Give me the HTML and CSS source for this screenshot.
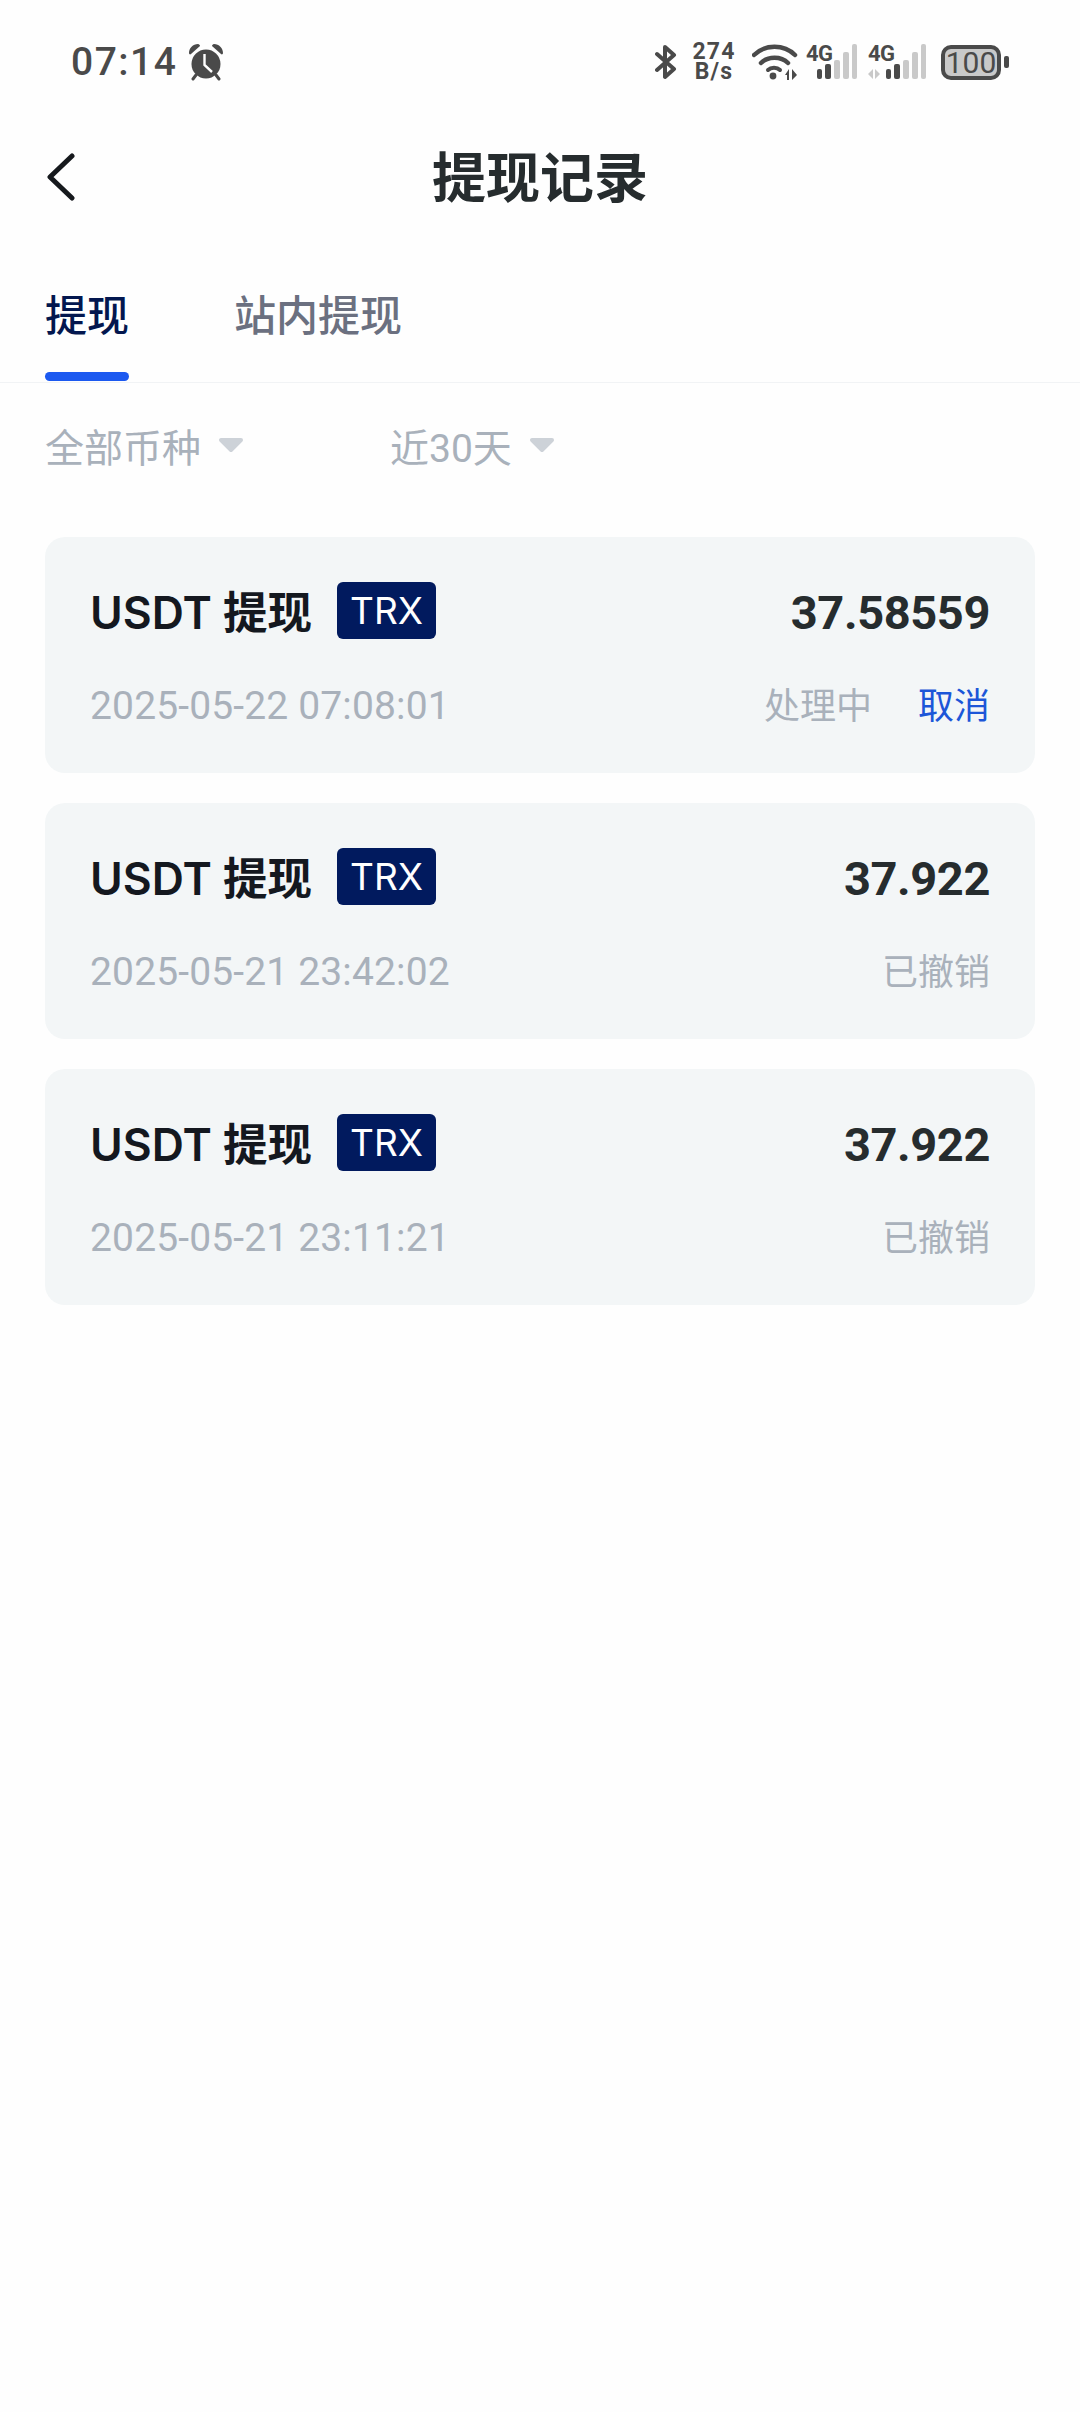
FILE: index.html
```html
<!DOCTYPE html>
<html>
<head>
	<meta charset="UTF-8">
	<title>提现记录</title>
	<link rel="stylesheet" href="styles.css">
</head>
<body>
	<div class="status-bar">
		<div class="status-left">
			<span class="clock">07:14</span>
			<svg class="alarm" width="36" height="38" viewBox="0 0 36 38">
				<circle cx="18" cy="21" r="14.5" fill="#4a4a4a"/>
				<path d="M1 10 C1 5 5 1 10 1 C11 1 12 2 12 3 L3 11 C2 12 1 11 1 10Z M35 10 C35 5 31 1 26 1 C25 1 24 2 24 3 L33 11 C34 12 35 11 35 10Z" fill="#4a4a4a"/>
				<path d="M8 32 L5 36 M28 32 L31 36" stroke="#4a4a4a" stroke-width="3" stroke-linecap="round"/>
				<path d="M16.5 11 V22 L24 29" fill="none" stroke="#fff" stroke-width="2.4"/>
			</svg>
		</div>
		<div class="status-right">
			<svg class="bt" width="22" height="36" viewBox="0 0 22 36">
				<path d="M2 10 L19 25 L10 33 V3 L19 11 L2 26" fill="none" stroke="#4a4a4a" stroke-width="4" stroke-linecap="round" stroke-linejoin="round"/>
			</svg>
			<div class="speed"><span>274</span><span>B/s</span></div>
			<svg class="wifi" width="46" height="36" viewBox="0 0 46 36">
				<path d="M2 11 C13 0 32 0 43 11" fill="none" stroke="#4a4a4a" stroke-width="4.5" stroke-linecap="round"/>
				<path d="M9 19 C16 12 29 12 36 19" fill="none" stroke="#4a4a4a" stroke-width="4.5" stroke-linecap="round"/>
				<path d="M16 26 C19 23 25 23 28 26" fill="none" stroke="#4a4a4a" stroke-width="4" stroke-linecap="round"/>
				<circle cx="21" cy="32" r="3.4" fill="#4a4a4a"/>
				<path d="M33 31 L37 25 V36 H35 V31Z M40 25 L45 31 L40 36Z" fill="#4a4a4a"/>
			</svg>
			<div class="signal first">
				<span class="net">4G</span>
				<svg class="bars" width="40" height="36" viewBox="0 0 40 36">
					<rect x="0" y="25" width="5" height="10" rx="2" fill="#4a4a4a"/>
					<rect x="8" y="20" width="6" height="15" rx="2" fill="#4a4a4a"/>
					<rect x="17" y="16" width="6" height="19" rx="2" fill="#c9c9c9"/>
					<rect x="26" y="8" width="6" height="27" rx="2" fill="#c9c9c9"/>
					<rect x="35" y="0" width="5" height="35" rx="2" fill="#c9c9c9"/>
				</svg>
			</div>
			<div class="signal">
				<span class="net">4G</span>
				<svg width="58" height="36" viewBox="0 0 58 36">
					<path d="M5 25 V35 L0 30Z M7 25 L12 30 L7 35Z" fill="#c9c9c9"/>
					<rect x="18" y="25" width="5" height="10" rx="2" fill="#4a4a4a"/>
					<rect x="26" y="20" width="6" height="15" rx="2" fill="#4a4a4a"/>
					<rect x="35" y="16" width="6" height="19" rx="2" fill="#c9c9c9"/>
					<rect x="44" y="8" width="6" height="27" rx="2" fill="#c9c9c9"/>
					<rect x="53" y="0" width="5" height="35" rx="2" fill="#c9c9c9"/>
				</svg>
			</div>
			<div class="battery"><span class="battery-body">100</span><span class="battery-tip"></span></div>
		</div>
	</div>

	<div class="nav">
		<svg class="back" width="30" height="48" viewBox="0 0 30 48">
			<path d="M27 3 L5 24 L27 45" fill="none" stroke="#16191d" stroke-width="5" stroke-linecap="round" stroke-linejoin="round"/>
		</svg>
		<h1 class="nav-title">提现记录</h1>
	</div>

	<div class="tabs">
		<div class="tab active">提现</div>
		<div class="tab">站内提现</div>
	</div>

	<div class="filters">
		<div class="filter coin">全部币种
			<svg class="caret" width="26" height="16" viewBox="0 0 26 16"><path d="M3 3 H23 L13 13Z" fill="#cdd2d8" stroke="#cdd2d8" stroke-width="4" stroke-linejoin="round"/></svg>
		</div>
		<div class="filter">近30天
			<svg class="caret" width="26" height="16" viewBox="0 0 26 16"><path d="M3 3 H23 L13 13Z" fill="#cdd2d8" stroke="#cdd2d8" stroke-width="4" stroke-linejoin="round"/></svg>
		</div>
	</div>

	<div class="record-list">
		<div class="record">
			<div class="record-row">
				<div class="record-name">USDT 提现<span class="chain">TRX</span></div>
				<div class="amount">37.58559</div>
			</div>
			<div class="record-row">
				<div class="time">2025-05-22 07:08:01</div>
				<div class="state">处理中<a class="cancel">取消</a></div>
			</div>
		</div>
		<div class="record">
			<div class="record-row">
				<div class="record-name">USDT 提现<span class="chain">TRX</span></div>
				<div class="amount">37.922</div>
			</div>
			<div class="record-row">
				<div class="time">2025-05-21 23:42:02</div>
				<div class="state">已撤销</div>
			</div>
		</div>
		<div class="record">
			<div class="record-row">
				<div class="record-name">USDT 提现<span class="chain">TRX</span></div>
				<div class="amount">37.922</div>
			</div>
			<div class="record-row">
				<div class="time">2025-05-21 23:11:21</div>
				<div class="state">已撤销</div>
			</div>
		</div>
	</div>
</body>
</html>
```

FILE: styles.css
```css
* {
	box-sizing: border-box;
}
html, body {
	margin: 0;
	padding: 0;
}
body {
	width: 1080px;
	height: 2412px;
	overflow: hidden;
	background: #fefefe;
	font-family: 'Inter', 'Noto Sans CJK SC', sans-serif;
}
.status-bar {
	display: flex;
	justify-content: space-between;
	align-items: center;
	height: 124px;
	padding: 0 71px;
	color: #4a4a4a;
}
.status-left, .status-right {
	display: flex;
	align-items: center;
}
.clock {
	font: 500 39px 'Roboto', sans-serif;
	letter-spacing: 1.5px;
}
.alarm {
	margin-left: 11px;
}
.bt {
	margin-right: 15px;
}
.speed {
	display: flex;
	flex-direction: column;
	align-items: center;
	width: 44px;
	font: 700 23px/20px 'Roboto', sans-serif;
	letter-spacing: 1.2px;
}
.wifi {
	margin-left: 16px;
}
.signal {
	position: relative;
	display: flex;
	margin-left: 11px;
}
.signal.first {
	margin-left: 8px;
}
.bars {
	margin-left: 11px;
}
.net {
	position: absolute;
	left: 0;
	top: -2px;
	font: 700 22px/24px 'Roboto', sans-serif;
	letter-spacing: -0.5px;
}
.battery {
	display: flex;
	align-items: center;
	margin-left: 15px;
}
.battery-body {
	width: 60px;
	height: 35px;
	border: 4px solid #4a4a4a;
	border-radius: 10px;
	background: #c9c9c9;
	color: #4a4a4a;
	font: 400 30px/27px 'Roboto', sans-serif;
	text-align: center;
}
.battery-tip {
	width: 5px;
	height: 12px;
	margin-left: 3px;
	border-radius: 2px;
	background: #4a4a4a;
}
.nav {
	position: relative;
	display: flex;
	align-items: center;
	justify-content: center;
	height: 106px;
	padding-bottom: 5px;
}
.back {
	position: absolute;
	left: 45px;
	top: 29px;
}
.nav-title {
	margin: 0;
	color: #262c2e;
	font-size: 54px;
	font-weight: 700;
}
.tabs {
	display: flex;
	gap: 105px;
	height: 153px;
	padding: 0 45px;
	border-bottom: 1px solid #f1f3f5;
}
.tab {
	position: relative;
	padding-top: 55px;
	color: #6b7080;
	font-size: 42px;
	font-weight: 500;
	line-height: 62px;
}
.tab.active {
	color: #03174f;
}
.tab.active::after {
	content: "";
	position: absolute;
	left: 0;
	right: 0;
	top: 142px;
	height: 9px;
	border-radius: 5px;
	background: #1c59f0;
}
.filters {
	display: flex;
	align-items: center;
	height: 124px;
	padding: 0 45px;
}
.filter {
	display: flex;
	align-items: center;
	color: #a9b1bb;
	font-family: 'Roboto', 'Noto Sans CJK SC', sans-serif;
	font-size: 39px;
}
.filter.coin {
	width: 345px;
}
.caret {
	margin-left: 17px;
}
.record-list {
	display: flex;
	flex-direction: column;
	gap: 30px;
	padding: 30px 45px 0;
}
.record {
	display: flex;
	flex-direction: column;
	justify-content: space-between;
	height: 236px;
	padding: 45px 45px 42px;
	border-radius: 20px;
	background: #f3f6f7;
}
.record-row {
	display: flex;
	justify-content: space-between;
	align-items: center;
}
.record-name {
	display: flex;
	align-items: center;
	color: #14181f;
	font-size: 44.5px;
	font-weight: 600;
	line-height: 60px;
}
.chain {
	width: 99px;
	height: 57px;
	margin: 0 0 4px 25px;
	border-radius: 6px;
	background: #011a5e;
	color: #fff;
	font-size: 37px;
	font-weight: 400;
	line-height: 57px;
	text-align: center;
}
.amount {
	color: #262c2e;
	font: 700 47px 'Roboto', sans-serif;
	letter-spacing: -0.4px;
}
.time {
	color: #a9b1bb;
	font: 400 39px/50px 'Roboto', sans-serif;
	letter-spacing: 0.15px;
}
.state {
	color: #a9b1bb;
	font-size: 36px;
	line-height: 50px;
}
.cancel {
	margin-left: 46px;
	color: #1c56d8;
}
```
